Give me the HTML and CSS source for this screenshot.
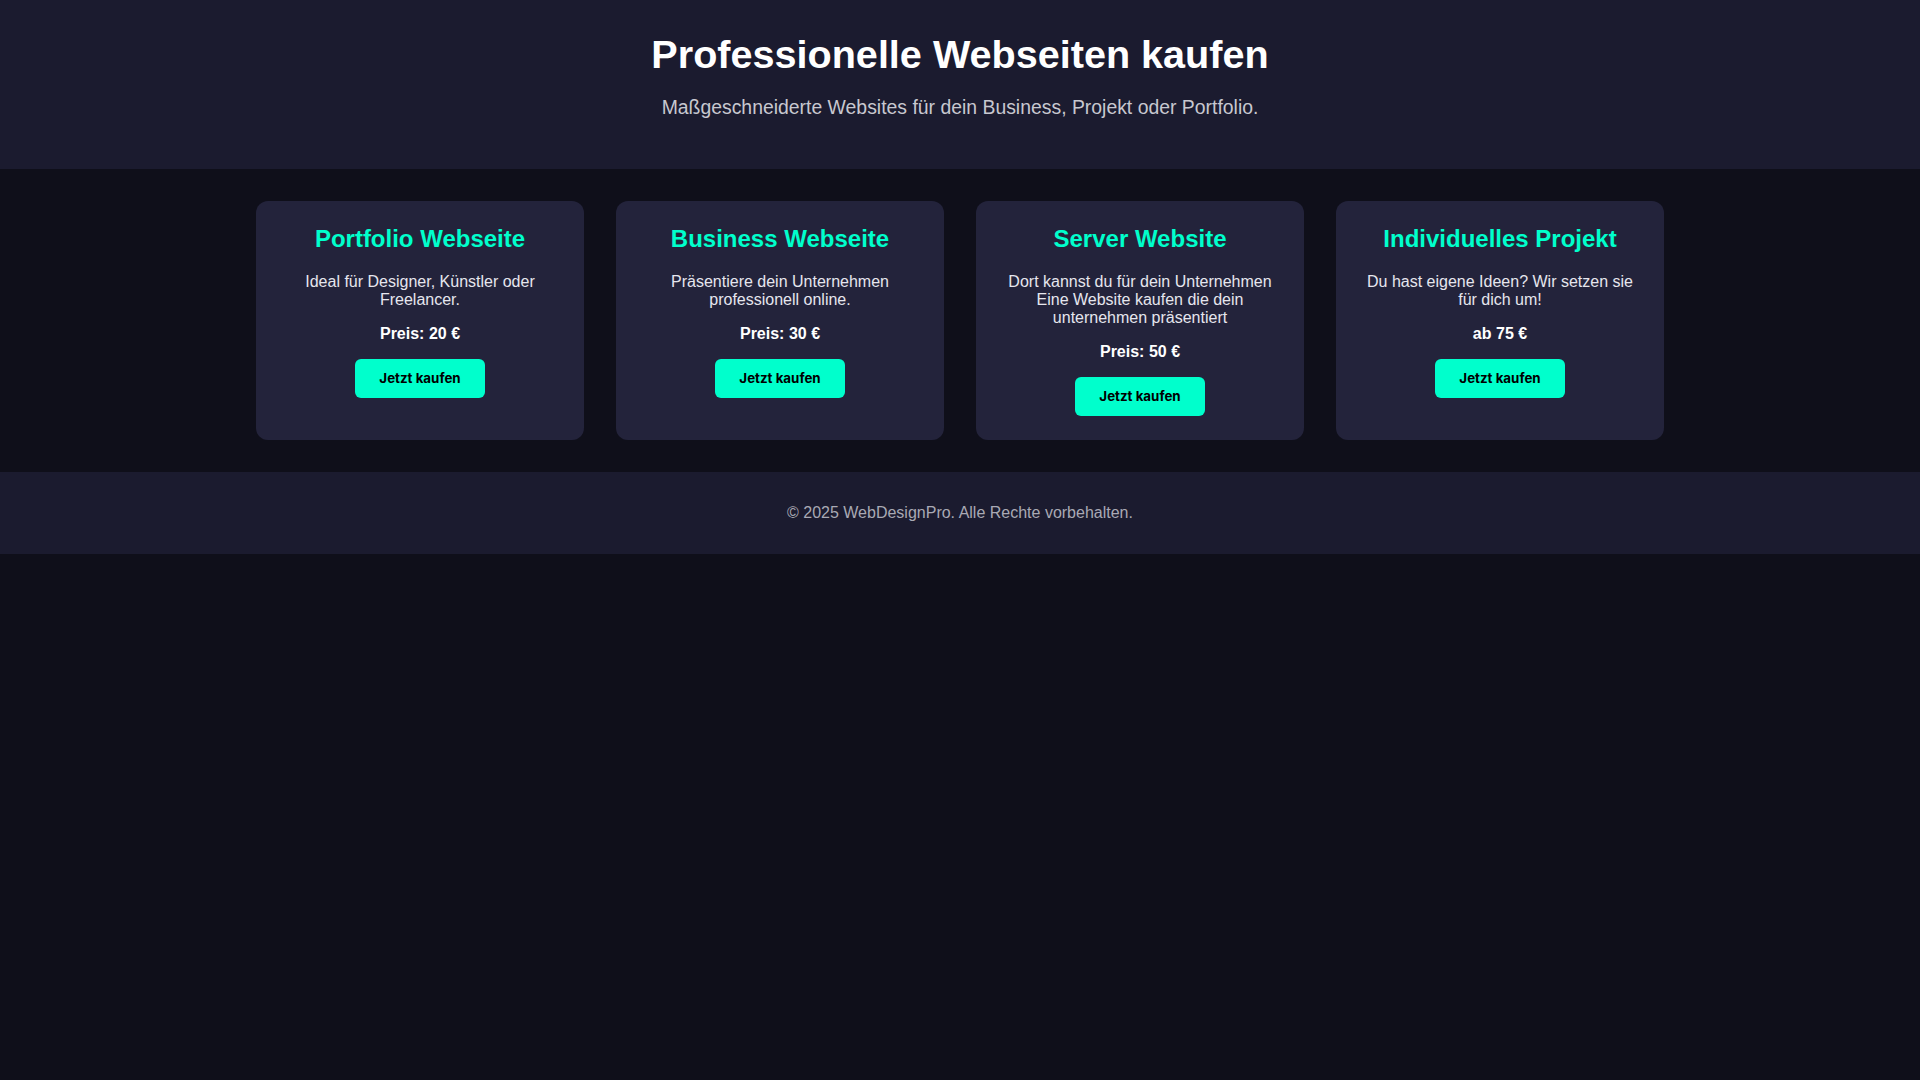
FILE: index.html
```html
<!DOCTYPE html>
<html lang="de">
<head>
<meta charset="utf-8">
<title>WebDesignPro – Webseiten kaufen</title>
<link rel="stylesheet" href="styles.css">
</head>
<body>
<header class="site-header">
  <h1 class="site-title">Professionelle Webseiten kaufen</h1>
  <p class="site-subtitle">Maßgeschneiderte Websites für dein Business, Projekt oder Portfolio.</p>
</header>
<main class="offers">
  <div class="card">
    <h2 class="card-title">Portfolio Webseite</h2>
    <p class="card-text">Ideal für Designer, Künstler oder Freelancer.</p>
    <p class="card-price">Preis: 20 €</p>
    <button class="buy-btn" type="button">Jetzt kaufen</button>
  </div>
  <div class="card">
    <h2 class="card-title">Business Webseite</h2>
    <p class="card-text">Präsentiere dein Unternehmen professionell online.</p>
    <p class="card-price">Preis: 30 €</p>
    <button class="buy-btn" type="button">Jetzt kaufen</button>
  </div>
  <div class="card">
    <h2 class="card-title">Server Website</h2>
    <p class="card-text">Dort kannst du für dein Unternehmen Eine Website kaufen die dein unternehmen präsentiert</p>
    <p class="card-price">Preis: 50 €</p>
    <button class="buy-btn" type="button">Jetzt kaufen</button>
  </div>
  <div class="card">
    <h2 class="card-title">Individuelles Projekt</h2>
    <p class="card-text">Du hast eigene Ideen? Wir setzen sie für dich um!</p>
    <p class="card-price">ab 75 €</p>
    <button class="buy-btn" type="button">Jetzt kaufen</button>
  </div>
</main>
<footer class="site-footer">
  <p class="footer-text">© 2025 WebDesignPro. Alle Rechte vorbehalten.</p>
</footer>
</body>
</html>
```

FILE: styles.css
```css
html, body {
  margin: 0;
  padding: 0;
}

body {
  background: #0f0f1a;
  color: #ffffff;
  font-family: "Liberation Sans", Arial, sans-serif;
  font-size: 16px;
}

.site-header {
  background: #1b1b2f;
  text-align: center;
  padding: 32px 16px;
}

.site-title {
  margin: 0;
  font-size: 39.6px;
  font-weight: 700;
  color: #ffffff;
}

.site-subtitle {
  margin: 19px 0 17.5px;
  font-size: 19.4px;
  color: #c8c8d0;
}

.offers {
  display: flex;
  justify-content: center;
  align-items: stretch;
  gap: 32px;
  padding: 32px 16px;
}

.card {
  width: 328px;
  box-sizing: border-box;
  padding: 24px 24px 24px;
  background: #23233b;
  border-radius: 12px;
  text-align: center;
}

.card-title {
  margin: 0 0 20px;
  font-size: 24px;
  font-weight: 700;
  color: #00ffcc;
}

.card-text {
  margin: 0 0 16px;
  color: #e6e6ee;
}

.card-price {
  margin: 0 0 16px;
  font-weight: 700;
  color: #ffffff;
}

.buy-btn {
  font-family: Inter, "Noto Sans", sans-serif;
  font-size: 13.33px;
  font-weight: 700;
  color: #000000;
  background: #00ffcc;
  border: none;
  border-radius: 6px;
  padding: 11.5px 24px;
  cursor: pointer;
}

.site-footer {
  background: #1b1b2f;
  text-align: center;
  padding: 16px;
}

.footer-text {
  margin: 16px 0;
  color: #a9a9b4;
  font-size: 16px;
}
```
